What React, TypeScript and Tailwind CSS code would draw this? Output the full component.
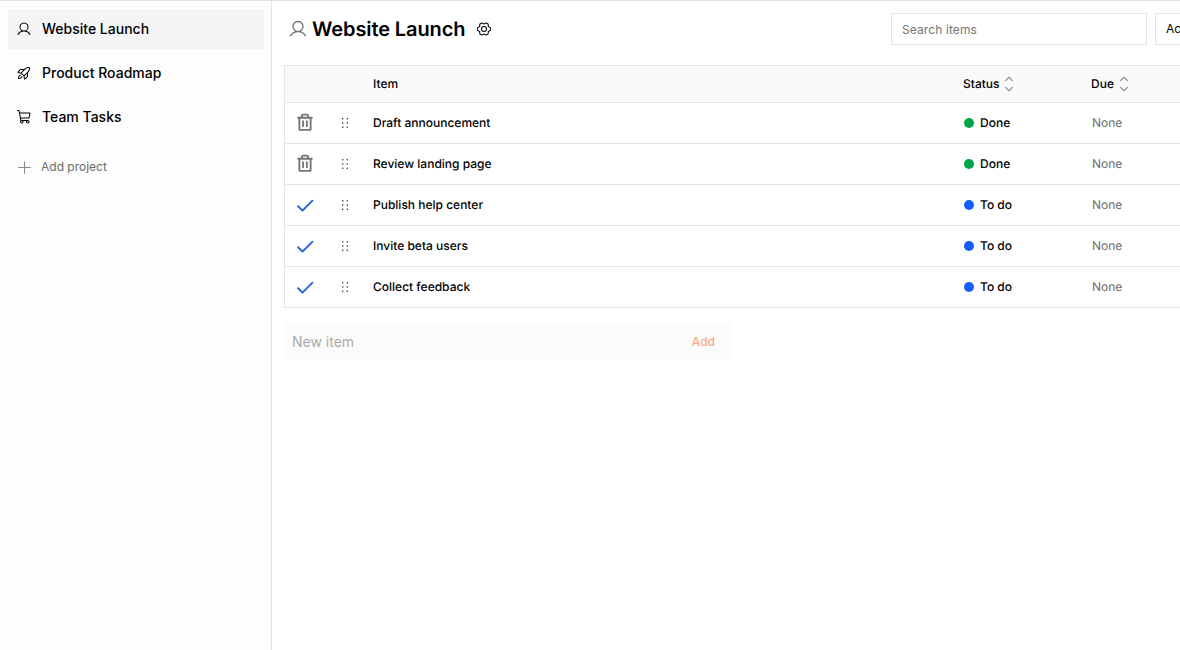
import { useState } from 'react';
import { PiUser, PiRocketLaunch, PiShoppingCart, PiTrashBold, PiCaretUpDown, PiGearSix, PiCheckBold, PiPlus, PiDotsSixVertical } from 'react-icons/pi';

const projects = [
  { id: 1, name: 'Website Launch', icon: PiUser },
  { id: 2, name: 'Product Roadmap', icon: PiRocketLaunch },
  { id: 3, name: 'Team Tasks', icon: PiShoppingCart },
];

const items = [
  { id: 1, title: 'Draft announcement', done: true },
  { id: 2, title: 'Review landing page', done: true },
  { id: 3, title: 'Publish help center', done: false },
  { id: 4, title: 'Invite beta users', done: false },
  { id: 5, title: 'Collect feedback', done: false },
];

export default function App() {
  const [active, setActive] = useState(1);
  const [search, setSearch] = useState('');
  const [newItem, setNewItem] = useState('');

  return (
    <div className="h-screen w-full overflow-hidden flex border-t border-[#e4e4e4] bg-white text-black font-['Inter',sans-serif] [text-rendering:geometricPrecision]">
      <aside className="w-[272px] shrink-0 border-r border-[#e4e4e4] bg-[#fdfdfd] p-2 pr-[7px]">
        <nav className="flex flex-col gap-1">
          {projects.map(p => (
            <button
              key={p.id}
              onClick={() => setActive(p.id)}
              className={`h-10 flex items-center gap-2.5 px-2 text-sm font-medium ${active === p.id ? 'bg-[#f5f5f5]' : ''}`}
            >
              <p.icon size={16} />
              {p.name}
            </button>
          ))}
        </nav>
        <button className="mt-3.5 h-8 flex items-center gap-2 px-2 text-xs text-[#6b6b6b]">
          <PiPlus size={17} className="text-[#888888]" />
          Add project
        </button>
      </aside>

      <main className="flex-1 min-w-0 overflow-hidden pl-3 pt-3">
        <div className="w-[1024px]">
          <header className="flex items-center h-8">
            <PiUser size={20} className="ml-1 text-[#777777]" />
            <h1 className="ml-1 text-xl font-semibold tracking-[-0.1px]">Website Launch</h1>
            <PiGearSix size={16} className="ml-[11px]" />
            <div className="ml-auto flex gap-2">
              <input
                value={search}
                onChange={e => setSearch(e.target.value)}
                placeholder="Search items"
                className="w-64 h-8 px-2.5 border border-[#e4e4e4] text-xs tracking-[0.1px] outline-none placeholder:text-[#757575]"
              />
              <button className="w-[153px] h-8 px-2.5 border border-[#e4e4e4] text-left text-xs">Active items</button>
            </div>
          </header>

          <div className="mt-5 border border-[#e4e4e4]">
            <div className="flex items-center h-9 bg-[#fafafa] text-xs font-medium">
              <div className="w-[88px]" />
              <div className="w-[590px]">Item</div>
              <div className="w-32 flex items-center gap-px">Status <PiCaretUpDown size={18} className="text-[#888888]" /></div>
              <div className="flex items-center gap-px">Due <PiCaretUpDown size={18} className="text-[#888888]" /></div>
            </div>
            {items.map(item => (
              <div key={item.id} className="flex items-center h-[41px] border-t border-[#e4e4e4] text-xs font-medium">
                <div className="w-[52px] pl-2.5">
                  {item.done ? <PiTrashBold size={20} className="text-[#757575]" /> : <PiCheckBold size={20} className="text-[#2563d9]" />}
                </div>
                <div className="w-9"><PiDotsSixVertical size={16} className="text-[#222222]" /></div>
                <div className="w-[591px]">{item.title}</div>
                <div className="w-32 flex items-center gap-1.5">
                  <span className={`size-2.5 rounded-full ${item.done ? 'bg-[#00a544]' : 'bg-[#155dfc]'}`} />
                  {item.done ? 'Done' : 'To do'}
                </div>
                <div className="font-normal text-[#6b6b6b]">None</div>
              </div>
            ))}
          </div>

          <form className="mt-4 w-[448px] h-9 flex items-center pl-2 pr-[17px] bg-[#fbfbfb]" onSubmit={e => e.preventDefault()}>
            <input
              value={newItem}
              onChange={e => setNewItem(e.target.value)}
              placeholder="New item"
              className="flex-1 text-sm outline-none placeholder:text-[#aaaaaa]"
            />
            <button className="text-xs font-medium text-[#f5ab84]">Add</button>
          </form>
        </div>
      </main>
    </div>
  );
}
